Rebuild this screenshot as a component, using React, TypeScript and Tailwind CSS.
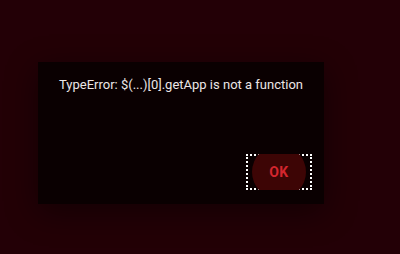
import React from "react";

export default function App() {
  return (
    <div
      className="w-[400px] h-[254px] bg-[#230006] overflow-hidden pl-[38px] pt-[62px]"
      style={{ fontFamily: "Roboto, 'Liberation Sans', sans-serif" }}
    >
      <div className="w-[286px] h-[142px] bg-[#0a0001] shadow-[0_8px_30px_rgba(0,0,0,0.45)] flex flex-col">
        <div className="pt-[13px] text-center text-[13px] leading-[20px] text-[#ece6e6]">
          TypeError: $(...)[0].getApp is not a function
        </div>
        <div className="flex-1" />
        <div className="flex justify-end pr-[12px] pb-[14px]">
          <div className="relative w-[66px] h-[36px] outline-2 outline-dotted outline-white -outline-offset-2 overflow-hidden flex items-center justify-center">
            <div className="absolute left-1/2 top-1/2 w-[54px] h-[54px] -translate-x-1/2 -translate-y-1/2 rounded-full bg-[#3d0505]" />
            <span className="relative text-[14px] font-bold text-[#d4262e] tracking-[0.5px]">OK</span>
          </div>
        </div>
      </div>
    </div>
  );
}
